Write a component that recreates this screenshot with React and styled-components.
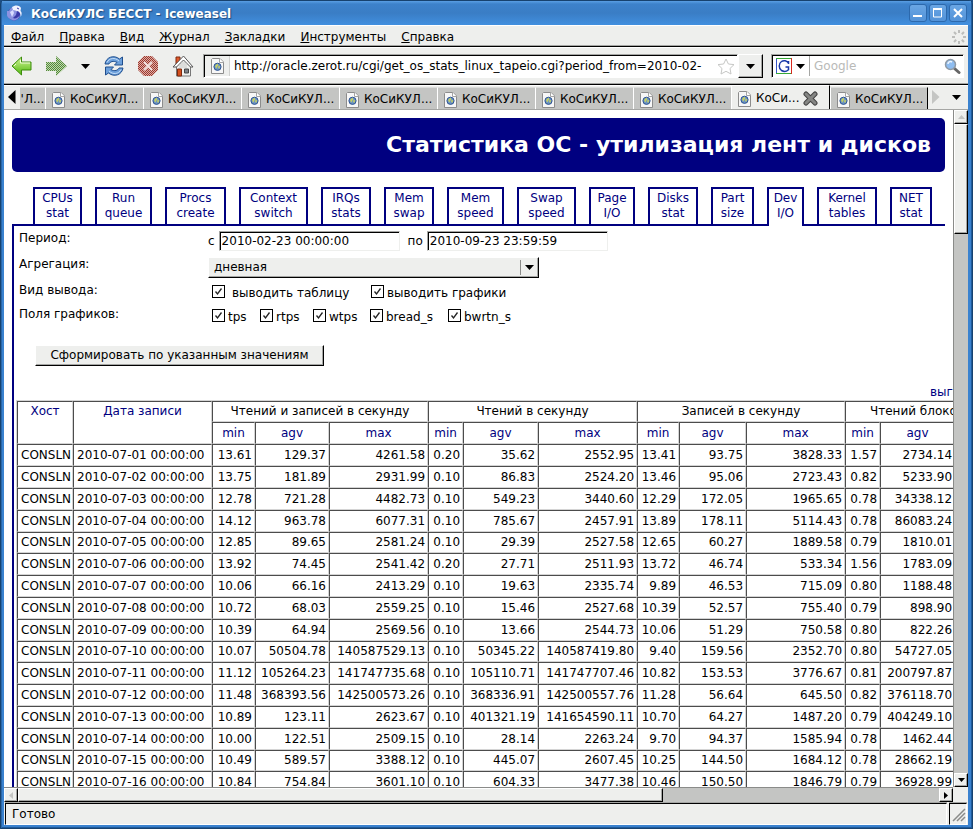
import React from "react";
import styled, { createGlobalStyle, css } from "styled-components";

const navy = "#000080";
const face = "#eeefed";
const trough = "#c4c5c3";

const GlobalStyle = createGlobalStyle`
  *, *::before, *::after { box-sizing: border-box; }
  body { margin: 0; background: #1d4f86; overflow: hidden; }
  body, button, input, select {
    font-family: "DejaVu Sans", "Noto Sans", sans-serif;
    font-size: 12px;
    line-height: 15px;
    color: #000;
  }
  button, input, select { margin: 0; padding: 0; border-radius: 0; }
  svg { display: block; flex: none; }
`;

const raised = css`
  background: ${face};
  border: 1px solid;
  border-color: #fff #000 #000 #fff;
  box-shadow: inset -1px -1px 0 #a5a6a4;
`;

/* ---------- window frame ---------- */

const Window = styled.div`
  height: 100vh;
  display: flex;
  flex-direction: column;
  background: #3a82cf;
  border: 1px solid #17426f;
  border-radius: 4px 4px 0 0;
  padding: 0 4px 3px 3px;
  box-shadow: inset 1px 0 0 #2a67a8, inset -1px -1px 0 #1f5b9b;
`;
const TitleBar = styled.header`
  flex: none;
  height: 24px;
  margin: 0 -3px 0 -2px;
  padding: 0 4px 0 5px;
  display: flex;
  align-items: center;
  gap: 8px;
  background: linear-gradient(#5a9fe4, #3d82cb 3px, #3a7dc5 12px, #418fdf);
`;
const WindowTitle = styled.h1`
  flex: 1;
  margin: 0;
  padding-top: 2px;
  font-size: 12px;
  line-height: 15px;
  color: #fff;
  text-shadow: 1px 1px 1px #1b4a80;
`;
const WindowButtons = styled.div`
  display: flex;
  gap: 2px;
`;
const WindowButton = styled.button`
  width: 18px;
  height: 18px;
  display: grid;
  place-items: center;
  border: 1px solid #2c69ad;
  border-radius: 3px;
  background: linear-gradient(#6aa6e4, #5292d8);
`;
const Client = styled.div`
  flex: 1;
  min-height: 0;
  display: flex;
  flex-direction: column;
  background: ${face};
`;

/* ---------- browser bars ---------- */

const MenuBar = styled.nav`
  flex: none;
  height: 22px;
  padding: 2px 2px 0 7px;
  display: flex;
  align-items: center;
  gap: 15px;
  border-top: 1px solid #fff;
  border-bottom: 1px solid #000;
  box-shadow: inset 0 -1px 0 #a5a6a4;
`;
const MenuItem = styled.button`
  border: 0;
  background: none;
  font-size: 12px;
  &::first-letter { text-decoration: underline; }
`;
const Throbber = styled.div`
  margin-left: auto;
`;
const ToolBar = styled.div`
  flex: none;
  height: 38px;
  padding: 0 4px 0 7px;
  display: flex;
  align-items: center;
  border-top: 1px solid #fff;
  border-bottom: 1px solid #000;
  box-shadow: inset 0 -1px 0 #a5a6a4;
`;
const ToolButtons = styled.div`
  display: flex;
  align-items: center;
  gap: 14px;
  margin-right: 9px;
`;
const IconButton = styled.button`
  display: grid;
  place-items: center;
  border: 0;
  background: none;
`;
const SunkenField = styled.div`
  height: 24px;
  display: flex;
  align-items: center;
  background: #fff;
  border: 1px solid;
  border-color: #a5a6a4 #fff #fff #a5a6a4;
  box-shadow: inset 1px 1px 0 #000;
  padding-left: 1px;
`;
const AddressField = styled(SunkenField)`
  flex: 1;
  min-width: 0;
  padding-right: 2px;
`;
const SearchField = styled(SunkenField)`
  width: 193px;
  margin-left: 8px;
  gap: 4px;
  padding: 0 2px;
`;
const FieldIcon = styled.div`
  width: 25px;
  height: 20px;
  display: grid;
  place-items: center;
  background: ${face};
  border-right: 1px solid #d0d1cf;
`;
const BareInput = styled.input`
  flex: 1;
  min-width: 0;
  height: 20px;
  border: 0;
  outline: 0;
  background: none;
  margin-left: ${(p) => p.$inset || 0}px;
  &::placeholder { color: #b9bab8; opacity: 1; }
`;
const DropButton = styled.button`
  ${raised}
  width: 25px;
  height: 24px;
  display: grid;
  place-items: center;
`;
const Engine = styled.button`
  height: 20px;
  width: 36px;
  display: flex;
  align-items: center;
  gap: 4px;
  border: 0;
  border-right: 1px solid #a5a6a4;
  background: none;
  padding-left: 2px;
`;

const TabStrip = styled.div`
  flex: none;
  height: 25px;
  display: flex;
  align-items: flex-end;
  border-top: 1px solid #fff;
  border-bottom: 1px solid #a5a6a4;
`;
const StripButton = styled.button`
  width: ${(p) => p.$width}px;
  height: 24px;
  display: grid;
  place-items: center;
  border: 0;
  background: none;
`;
const Tab = styled.button`
  width: 98px;
  height: 22px;
  padding: 2px 2px 0 5px;
  display: flex;
  align-items: center;
  gap: 4px;
  border: 0;
  border-left: 1px solid #fff;
  border-top: 1px solid #dcdddb;
  background: ${trough};
  white-space: nowrap;
  overflow: hidden;
  ${(p) => p.$cut && css`width: 25px; padding: 2px 0 0; border-left: 0; justify-content: center;`}
  ${(p) => p.$active && css`
    width: 99px;
    height: 24px;
    background: ${face};
    border-top-color: #fff;
    border-right: 1px solid #000;
  `}
  ${(p) => p.$last && css`border-right: 1px solid #000;`}
`;

/* ---------- viewport and scroll bars ---------- */

const Viewport = styled.div`
  flex: 1;
  min-height: 0;
  display: grid;
  grid-template-columns: minmax(0, 1fr) 15px;
  grid-template-rows: minmax(0, 1fr) 15px;
`;
const Page = styled.main`
  overflow: hidden;
  background: #fff;
  padding: 8px 8px 0 8px;
`;
const ScrollTrack = styled.div`
  display: flex;
  flex-direction: ${(p) => (p.$vertical ? "column" : "row")};
  justify-content: space-between;
  background: ${trough};
  border-left: ${(p) => (p.$vertical ? "1px solid #8a8b89" : "0")};
  border-top: ${(p) => (p.$vertical ? "0" : "1px solid #8a8b89")};
`;
const ScrollButton = styled.button`
  ${raised}
  flex: none;
  width: 14px;
  height: 14px;
  display: grid;
  place-items: center;
`;
const ThumbLane = styled.div`
  flex: 1;
  display: flex;
  flex-direction: ${(p) => (p.$vertical ? "column" : "row")};
`;
const Thumb = styled.div`
  ${raised}
  flex: 0 0 ${(p) => p.$share}%;
`;
const StatusBar = styled.footer`
  flex: none;
  height: 23px;
  display: flex;
  gap: 2px;
  padding: 1px 1px 0 1px;
`;
const StatusPane = styled.div`
  flex: ${(p) => (p.$grip ? "0 0 17px" : "1")};
  padding-left: ${(p) => (p.$grip ? 2 : 6)}px;
  display: flex;
  align-items: center;
  border: 1px solid;
  border-color: #000 #fff #fff #000;
  box-shadow: 0 -1px 0 #a5a6a4;
`;

/* ---------- page ---------- */

const Banner = styled.h2`
  margin: 0;
  height: 54px;
  padding: 0 14px;
  display: flex;
  align-items: center;
  justify-content: flex-end;
  border-radius: 5px;
  background: ${navy};
  color: #fff;
  font-size: 22px;
  line-height: 26px;
  white-space: nowrap;
`;
const Sections = styled.nav`
  display: flex;
  gap: 13px;
  margin-top: 15px;
  padding-left: 21px;
  border-bottom: 2px solid ${navy};
`;
const SectionLink = styled.a`
  flex: 0 0 ${(p) => p.$width}px;
  height: ${(p) => (p.$current ? 39 : 37)}px;
  margin-bottom: ${(p) => (p.$current ? -2 : 0)}px;
  padding-top: 2px;
  border: 2px solid ${navy};
  border-bottom: 0;
  background: #fff;
  color: ${navy};
  text-align: center;
  text-decoration: none;
  white-space: pre-line;
`;
const Panel = styled.section`
  border-left: 2px solid ${navy};
  padding: 5px 0 0 5px;
`;
const Form = styled.form`
  display: grid;
  grid-template-columns: 189px 1fr;
  grid-template-rows: 26px 26px 24px 24px;
`;
const FormLabel = styled.div``;
const Controls = styled.div`
  display: flex;
  align-items: flex-start;
`;
const DateLabel = styled.label`
  display: flex;
  align-items: center;
  gap: 4px;
  margin-right: 8px;
`;
const DateInput = styled.input`
  width: 181px;
  height: 20px;
  padding: 0 2px;
  background: #fff;
  border: 1px solid;
  border-color: #a5a6a4 ${face} ${face} #a5a6a4;
  box-shadow: inset 1px 1px 0 #000;
`;
const SelectBox = styled.div`
  display: grid;
  width: 331px;
  height: 21px;
  align-items: center;
  & > * { grid-area: 1 / 1; }
`;
const Select = styled.select`
  ${raised}
  appearance: none;
  width: 100%;
  height: 21px;
  padding: 0 24px 0 5px;
`;
const SelectArrow = styled.span`
  justify-self: end;
  width: 19px;
  height: 15px;
  padding-left: 4px;
  display: flex;
  align-items: center;
  border-left: 1px solid #8a8b89;
  pointer-events: none;
`;
const CheckLabel = styled.label`
  display: flex;
  align-items: flex-start;
  gap: ${(p) => p.$gap || 3}px;
  width: ${(p) => p.$width}px;
  padding: 2px 0 0 4px;
  white-space: nowrap;
`;
const CheckText = styled.span`
  margin-top: 1px;
`;
const Check = styled.span`
  display: grid;
  place-items: center;
  & > * { grid-area: 1 / 1; }
  & > svg { pointer-events: none; visibility: hidden; }
  & > input:checked + svg { visibility: visible; }
`;
const CheckInput = styled.input`
  appearance: none;
  width: 13px;
  height: 13px;
  border: 1px solid #000;
  background: #fff;
`;
const Submit = styled.button`
  ${raised}
  grid-column: 1 / -1;
  justify-self: start;
  width: 289px;
  height: 21px;
  margin: 14px 0 0 16px;
  white-space: nowrap;
`;
const Export = styled.a`
  display: block;
  margin: 19px 0 0 911px;
  color: ${navy};
  text-decoration: none;
  white-space: nowrap;
`;
const Grid = styled.table`
  table-layout: fixed;
  width: 1040px;
  margin: 0 0 0 -3px;
  border: 1px solid #d4d4d4;
  border-collapse: separate;
  border-spacing: 0;
  white-space: nowrap;
`;
const Col = styled.col`
  width: ${(p) => p.$width}px;
`;
const cell = css`
  padding: 0 2px;
  border: 1px solid;
  border-color: #4c4c4c #d4d4d4 #d4d4d4 #4c4c4c;
`;
const HeadCell = styled.th`
  ${cell}
  height: ${(p) => (p.$group ? 21 : 22)}px;
  font-weight: normal;
  color: ${(p) => (p.$group ? "#000" : navy)};
  vertical-align: ${(p) => (p.rowSpan > 1 ? "top" : "middle")};
  padding-top: ${(p) => (p.rowSpan > 1 ? 2 : 0)}px;
`;
const Row = styled.tr`
  height: 22px;
  &:nth-child(5n) { height: 21px; }
`;
const Cell = styled.td`
  ${cell}
  text-align: ${(p) => (p.$text ? "left" : "right")};
  padding-left: ${(p) => (p.$text ? 3 : 2)}px;
`;

/* ---------- icons ---------- */

const Arrow = ({ dir = "down", size = 9, color = "#000" }) => {
  const shapes = {
    down: [size, (size + 1) / 2, "0,0 10,0 5,6"],
    up: [size, (size + 1) / 2, "0,6 10,6 5,0"],
    left: [(size + 1) / 2, size, "6,0 6,10 0,5"],
    right: [(size + 1) / 2, size, "0,0 0,10 6,5"],
  };
  const [w, h, points] = shapes[dir];
  const box = dir === "down" || dir === "up" ? "0 0 10 6" : "0 0 6 10";
  return (
    <svg width={w} height={h} viewBox={box} preserveAspectRatio="none">
      <polygon points={points} fill={color} />
    </svg>
  );
};

const PageIcon = () => (
  <svg width="15" height="16" viewBox="0 0 15 16">
    <path d="M2.500 .5h7.500l3.500 3.500v11.500h-12v-14z" fill="#f7f7f7" stroke="#8c8c8c" strokeLinejoin="round" />
    <path d="M9.500 .5v4h4" fill="#fff" stroke="#a5a5a5" />
    <circle cx="7.500" cy="8.800" r="3.600" fill="#6b93c4" stroke="#2f5593" />
    <path d="M5.500 7l2-1.300 1 1.500-1.300 1.500-.7 1.700-1.300-1.500zM8.500 8l1.800 .3-1 2.500-1.300-.8z" fill="#c3cf66" />
  </svg>
);

const AppIcon = () => (
  <svg width="16" height="17" viewBox="0 0 16 17">
    <circle cx="7" cy="9" r="6.500" fill="#3a39a8" />
    <path d="M2 6c1-3 4-5 7-4l-2 3 3 1-1 4-3 3c2 1 5 0 7-3-1 5-6 7-10 4-3-2-4-5-3-8z" fill="#8c92e0" />
    <path d="M5 2c3-2.500 8-2 9 1L13.500 6c1.500 1 1.500 4 0 6 .5-4-1.500-6-4-6L6 5z" fill="#f1f2ff" />
    <path d="M3 7l3-2 1 3-2 4z" fill="#d9dcff" />
    <path d="M10 3l2 1" stroke="#3a39a8" />
  </svg>
);

const Back = () => (
  <svg width="21" height="20" viewBox="0 0 21 20">
    <defs>
      <linearGradient id="leaf" x1="0" y1="0" x2="0" y2="1">
        <stop offset="0" stopColor="#d3f59a" />
        <stop offset="1" stopColor="#4fb80c" />
      </linearGradient>
    </defs>
    <path d="M10.500 1v5H20v8h-9.500v5L1 10z" fill="url(#leaf)" stroke="#3c8d0c" strokeLinejoin="round" />
    <path d="M9.500 4v3H19M3 10l2-2" fill="none" stroke="#effcd8" />
  </svg>
);

const Forward = () => (
  <svg width="21" height="20" viewBox="0 0 21 20">
    <defs>
      <pattern id="stippleGreen" width="2" height="2" patternUnits="userSpaceOnUse">
        <rect width="2" height="2" fill="#bfdcab" />
        <rect width="1" height="1" fill="#55853f" />
        <rect x="1" y="1" width="1" height="1" fill="#55853f" />
      </pattern>
    </defs>
    <path d="M10 0v6H0v9h10v5L21 10z" fill="url(#stippleGreen)" />
  </svg>
);

const Reload = () => (
  <svg width="20" height="20" viewBox="0 0 20 20">
    <g stroke="#1f4e8d" strokeLinejoin="round" fill="#6b9fdb">
      <path d="M1 8C2 1 10-1.500 15.500 3L18.500 1v8h-8l2.500-2.600C9.500 4.500 6 5.500 5 8z" />
      <path d="M19 12c-1 7-9 9.500-14.500 5L1.500 19v-8h8L7 13.600C10.500 15.500 14 14.500 15 12z" />
    </g>
    <path d="M3 6.500C5 2 11 1 15 5M17 13.500c-2 4.500-8 5.500-12 1.500" fill="none" stroke="#c3dcf6" />
  </svg>
);

const Stop = () => (
  <svg width="20" height="20" viewBox="0 0 20 20">
    <defs>
      <pattern id="stippleRed" width="2" height="2" patternUnits="userSpaceOnUse">
        <rect width="2" height="2" fill="#dfaca6" />
        <rect width="1" height="1" fill="#9a3a2e" />
        <rect x="1" y="1" width="1" height="1" fill="#9a3a2e" />
      </pattern>
    </defs>
    <path d="M6 0h8l6 6v8l-6 6H6l-6-6V6z" fill="url(#stippleRed)" />
    <path d="M6 6l8 8M14 6l-8 8" stroke="#f1e2df" strokeWidth="2" />
  </svg>
);

const Home = () => (
  <svg width="22" height="22" viewBox="0 0 22 22">
    <path d="M4 2h4v7H4z" fill="#e0592a" stroke="#7c2a10" />
    <path d="M4.500 10v11h14V10l-7-7z" fill="#f0f1ef" stroke="#777" />
    <path d="M11.500 1L1 12h3.500l7-7 7 7H21z" fill="#fff" stroke="#555" strokeLinejoin="round" />
    <path d="M8 9v4M10 7v6M12 7v6M14 8v5" stroke="#c9cac8" />
    <path d="M5.500 14h4v7h-4z" fill="#d5501e" stroke="#7c2a10" />
    <path d="M12.500 14h4v4h-4z" fill="#7d8288" stroke="#444" />
  </svg>
);

const Star = () => (
  <svg width="18" height="17" viewBox="0 0 18 17">
    <path d="M9 1l2.400 5 5.600.6-4 3.900 1 5.500-5-2.700L4 16l1-5.500-4-3.900L6.600 6z" fill="#fff" stroke="#c6c7c5" strokeLinejoin="round" />
  </svg>
);

const GoogleMark = () => (
  <svg width="16" height="16" viewBox="0 0 16 16">
    <path d="M0 0h16v16H0z" fill="#fff" />
    <path d="M.500 16V0" stroke="#3857c8" />
    <path d="M0 .500h15" stroke="#38a838" />
    <path d="M15.500 0v16" stroke="#d82a20" />
    <path d="M0 15.500h15" stroke="#38a838" />
    <path d="M12.500 6V3M12.500 5C11 2.500 7.500 2 5.500 3.500c-3 2-3 7 0 9 2 1.200 5 1 7-.8V9H9.500" fill="none" stroke="#1a3aa8" strokeWidth="1.500" />
  </svg>
);

const Lens = () => (
  <svg width="17" height="17" viewBox="0 0 17 17">
    <path d="M10.500 10.500l4.500 4" stroke="#666" strokeWidth="3" strokeLinecap="round" />
    <circle cx="6.500" cy="6.500" r="5" fill="#8fbdf0" stroke="#8f9aa5" strokeWidth="1.500" />
    <path d="M4 6c0-2 2-3 4-2" fill="none" stroke="#eef6ff" strokeWidth="1.500" />
  </svg>
);

const ThrobberDots = () => (
  <svg width="14" height="14" viewBox="0 0 14 14">
    <g fill="#bcbdbb">
      {[0, 45, 90, 135, 180, 225, 270, 315].map((a) => (
        <rect key={a} x="6" y="0" width="2" height="3" transform={`rotate(${a} 7 7)`} />
      ))}
    </g>
  </svg>
);

const CloseTab = () => (
  <svg width="15" height="15" viewBox="0 0 15 15">
    <path d="M3 3l9 9M12 3l-9 9" stroke="#444" strokeWidth="5" strokeLinecap="round" />
    <path d="M3 3l9 9M12 3l-9 9" stroke="#858684" strokeWidth="3" strokeLinecap="round" />
  </svg>
);

const Grip = () => (
  <svg width="14" height="15" viewBox="0 0 14 15">
    <path d="M1 14L13 2M5 14l8-8M9 14l4-4" stroke="#8a8b89" strokeWidth="1.500" />
  </svg>
);

const Tick = () => (
  <svg width="9" height="9" viewBox="0 0 9 9">
    <path d="M1.500 4.500L3.500 7l4-5.500" fill="none" stroke="#222" strokeWidth="1.300" />
  </svg>
);

/* ---------- data ---------- */

const menu = ["Файл", "Правка", "Вид", "Журнал", "Закладки", "Инструменты", "Справка"];

const sections = [
  ["CPUs\nstat", 49], ["Run\nqueue", 57], ["Procs\ncreate", 61], ["Context\nswitch", 69],
  ["IRQs\nstats", 50], ["Mem\nswap", 50], ["Mem\nspeed", 57], ["Swap\nspeed", 59],
  ["Page\nI/O", 46], ["Disks\nstat", 50], ["Part\nsize", 43], ["Dev\nI/O", 37],
  ["Kernel\ntables", 60], ["NET\nstat", 42],
];

const fields = [["tps", 48], ["rtps", 53], ["wtps", 57], ["bread_s", 78], ["bwrtn_s", 80]];

const columns = [56, 139, 43, 74, 99, 35, 75, 99, 42, 67, 99, 35, 75, 100];
const groups = ["Чтений и записей в секунду", "Чтений в секунду", "Записей в секунду", "Чтений блоков в секунду"];

const rows = `
01 13.61 129.37 4261.58 0.20 35.62 2552.95 13.41 93.75 3828.33 1.57 2734.14
02 13.75 181.89 2931.99 0.10 86.83 2524.20 13.46 95.06 2723.43 0.82 5233.90
03 12.78 721.28 4482.73 0.10 549.23 3440.60 12.29 172.05 1965.65 0.78 34338.12
04 14.12 963.78 6077.31 0.10 785.67 2457.91 13.89 178.11 5114.43 0.78 86083.24
05 12.85 89.65 2581.24 0.10 29.39 2527.58 12.65 60.27 1889.58 0.79 1810.01
06 13.92 74.45 2541.42 0.20 27.71 2511.93 13.72 46.74 533.34 1.56 1783.09
07 10.06 66.16 2413.29 0.10 19.63 2335.74 9.89 46.53 715.09 0.80 1188.48
08 10.72 68.03 2559.25 0.10 15.46 2527.68 10.39 52.57 755.40 0.79 898.90
09 10.39 64.94 2569.56 0.10 13.66 2544.73 10.06 51.29 750.58 0.80 822.26
10 10.07 50504.78 140587529.13 0.10 50345.22 140587419.80 9.40 159.56 2352.70 0.80 54727.05
11 11.12 105264.23 141747735.68 0.10 105110.71 141747707.46 10.82 153.53 3776.67 0.81 200797.87
12 11.48 368393.56 142500573.26 0.10 368336.91 142500557.76 11.28 56.64 645.50 0.82 376118.70
13 10.89 123.11 2623.67 0.10 401321.19 141654590.11 10.70 64.27 1487.20 0.79 404249.10
14 10.00 122.51 2509.15 0.10 28.14 2263.24 9.70 94.37 1585.94 0.78 1462.44
15 10.49 589.57 3388.12 0.10 445.07 2607.45 10.25 144.50 1684.12 0.78 28662.19
16 10.84 754.84 3601.10 0.10 604.33 3477.38 10.46 150.50 1846.79 0.79 36928.99
`.trim().split("\n").map((line) => line.split(" "));

const CheckField = ({ id, text, ...rest }) => (
  <CheckLabel htmlFor={id} {...rest}>
    <Check>
      <CheckInput id={id} type="checkbox" defaultChecked />
      <Tick />
    </Check>
    <CheckText>{text}</CheckText>
  </CheckLabel>
);

const BrowserTab = ({ last }) => (
  <Tab $last={last}>
    <PageIcon />
    КоСиКУЛ...
  </Tab>
);

export default function App() {
  return (
    <>
      <GlobalStyle />
      <Window>
        <TitleBar>
          <AppIcon />
          <WindowTitle>КоСиКУЛС БЕССТ - Iceweasel</WindowTitle>
          <WindowButtons>
            <WindowButton aria-label="Свернуть">
              <svg width="10" height="10"><path d="M0 8h9" stroke="#fff" strokeWidth="2" /></svg>
            </WindowButton>
            <WindowButton aria-label="Развернуть">
              <svg width="10" height="10"><path d="M.500 1h8v8h-8z" fill="none" stroke="#fff" /><path d="M0 1h9" stroke="#fff" strokeWidth="2" /></svg>
            </WindowButton>
            <WindowButton aria-label="Закрыть">
              <svg width="10" height="10"><path d="M1 1l8 8M9 1L1 9" stroke="#fff" strokeWidth="2" /></svg>
            </WindowButton>
          </WindowButtons>
        </TitleBar>

        <Client>
          <MenuBar>
            {menu.map((m) => <MenuItem key={m}>{m}</MenuItem>)}
            <Throbber><ThrobberDots /></Throbber>
          </MenuBar>

          <ToolBar>
            <ToolButtons>
              <IconButton aria-label="Назад"><Back /></IconButton>
              <IconButton aria-label="Вперёд"><Forward /></IconButton>
              <IconButton aria-label="История"><Arrow /></IconButton>
              <IconButton aria-label="Обновить"><Reload /></IconButton>
              <IconButton aria-label="Остановить"><Stop /></IconButton>
              <IconButton aria-label="Домой"><Home /></IconButton>
            </ToolButtons>
            <AddressField>
              <FieldIcon><PageIcon /></FieldIcon>
              <BareInput $inset={4} aria-label="Адрес" defaultValue="http://oracle.zerot.ru/cgi/get_os_stats_linux_tapeio.cgi?period_from=2010-02-" />
              <Star />
            </AddressField>
            <DropButton aria-label="Список адресов"><Arrow /></DropButton>
            <SearchField>
              <Engine aria-label="Поисковая система"><GoogleMark /><Arrow /></Engine>
              <BareInput aria-label="Поиск" placeholder="Google" />
              <Lens />
            </SearchField>
          </ToolBar>

          <TabStrip>
            <StripButton $width={16} aria-label="Вкладки влево"><Arrow dir="left" size={14} /></StripButton>
            <Tab $cut>'Л...</Tab>
            {[1, 2, 3, 4, 5, 6, 7].map((n) => <BrowserTab key={n} />)}
            <Tab $active><PageIcon />КоСи...<CloseTab /></Tab>
            <BrowserTab last />
            <StripButton $width={16} aria-label="Вкладки вправо"><Arrow dir="right" size={14} color="#c4c5c3" /></StripButton>
            <StripButton $width={24} aria-label="Все вкладки"><Arrow /></StripButton>
          </TabStrip>

          <Viewport>
            <Page>
              <Banner>Статистика ОС - утилизация лент и дисков</Banner>
              <Sections>
                {sections.map(([name, width]) => (
                  <SectionLink key={name} href="#" $width={width} $current={name.startsWith("Dev")}>{name}</SectionLink>
                ))}
              </Sections>
              <Panel>
                <Form>
                  <FormLabel>Период:</FormLabel>
                  <Controls>
                    <DateLabel>с <DateInput defaultValue="2010-02-23 00:00:00" /></DateLabel>
                    <DateLabel>по <DateInput defaultValue="2010-09-23 23:59:59" /></DateLabel>
                  </Controls>
                  <FormLabel as="label" htmlFor="aggregation">Агрегация:</FormLabel>
                  <SelectBox>
                    <Select id="aggregation"><option>дневная</option></Select>
                    <SelectArrow><Arrow /></SelectArrow>
                  </SelectBox>
                  <FormLabel>Вид вывода:</FormLabel>
                  <Controls>
                    <CheckField id="table" text="выводить таблицу" $width={159} $gap={7} />
                    <CheckField id="charts" text="выводить графики" />
                  </Controls>
                  <FormLabel>Поля графиков:</FormLabel>
                  <Controls>
                    {fields.map(([name, width]) => <CheckField key={name} id={name} text={name} $width={width} />)}
                  </Controls>
                  <Submit type="button">Сформировать по указанным значениям</Submit>
                </Form>
                <Export href="#">выгрузить</Export>
                <Grid>
                  <colgroup>
                    {columns.map((w, i) => <Col key={i} $width={w} />)}
                  </colgroup>
                  <thead>
                    <tr>
                      <HeadCell rowSpan={2}>Хост</HeadCell>
                      <HeadCell rowSpan={2}>Дата записи</HeadCell>
                      {groups.map((g) => <HeadCell key={g} colSpan={3} $group>{g}</HeadCell>)}
                    </tr>
                    <tr>
                      {groups.map((g) => ["min", "agv", "max"].map((k) => <HeadCell key={g + k}>{k}</HeadCell>))}
                    </tr>
                  </thead>
                  <tbody>
                    {rows.map(([day, ...values]) => (
                      <Row key={day}>
                        <Cell $text>CONSLN</Cell>
                        <Cell $text>2010-07-{day} 00:00:00</Cell>
                        {values.map((v, i) => <Cell key={i}>{v}</Cell>)}
                        <Cell />
                      </Row>
                    ))}
                  </tbody>
                </Grid>
              </Panel>
            </Page>
            <ScrollTrack $vertical>
              <ScrollButton aria-label="Вверх"><Arrow dir="up" size={7} color="#c4c5c3" /></ScrollButton>
              <ThumbLane $vertical><Thumb $share={17} /></ThumbLane>
              <ScrollButton aria-label="Вниз"><Arrow size={7} /></ScrollButton>
            </ScrollTrack>
            <ScrollTrack>
              <ScrollButton aria-label="Влево"><Arrow dir="left" size={7} color="#c4c5c3" /></ScrollButton>
              <ThumbLane><Thumb $share={70} /></ThumbLane>
              <ScrollButton aria-label="Вправо"><Arrow dir="right" size={7} /></ScrollButton>
            </ScrollTrack>
          </Viewport>

          <StatusBar>
            <StatusPane>Готово</StatusPane>
            <StatusPane $grip><Grip /></StatusPane>
          </StatusBar>
        </Client>
      </Window>
    </>
  );
}
